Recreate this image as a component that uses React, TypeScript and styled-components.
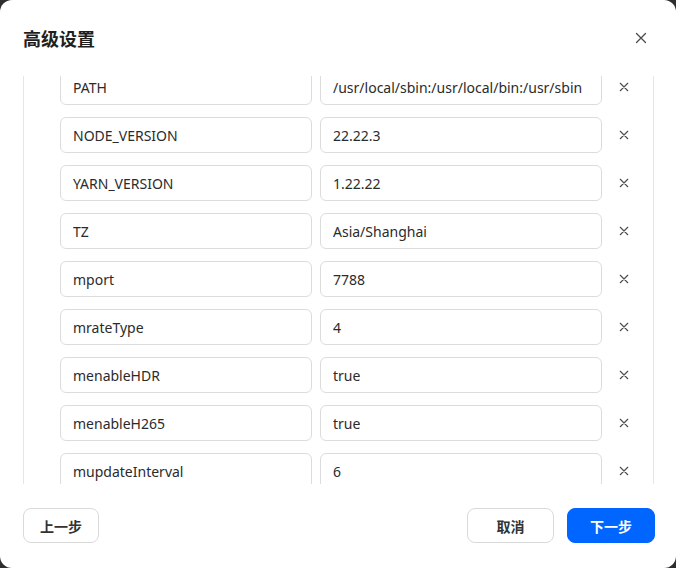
import React, { useEffect, useRef } from "react";
import styled, { createGlobalStyle } from "styled-components";

const GlobalStyle = createGlobalStyle`
  html, body {
    margin: 0;
    padding: 0;
    background: #2e2e2e;
  }
  * {
    box-sizing: border-box;
  }
`;

const ENV_ROWS: { key: string; value: string }[] = [
  { key: "HOME", value: "/root" },
  { key: "PATH", value: "/usr/local/sbin:/usr/local/bin:/usr/sbin" },
  { key: "NODE_VERSION", value: "22.22.3" },
  { key: "YARN_VERSION", value: "1.22.22" },
  { key: "TZ", value: "Asia/Shanghai" },
  { key: "mport", value: "7788" },
  { key: "mrateType", value: "4" },
  { key: "menableHDR", value: "true" },
  { key: "menableH265", value: "true" },
  { key: "mupdateInterval", value: "6" },
  { key: "mlogLevel", value: "info" }
];

const Dialog = styled.div`
  width: 676px;
  height: 568px;
  background: #fff;
  border-radius: 12px;
  display: flex;
  flex-direction: column;
  font-family: "Noto Sans", "Noto Sans CJK SC", sans-serif;
  color: #333;
  overflow: hidden;
`;

const Header = styled.div`
  display: flex;
  align-items: center;
  justify-content: space-between;
  height: 76px;
  padding: 0 21px 0 23px;
`;

const Title = styled.h2`
  margin: 0;
  font-size: 18px;
  font-weight: 700;
  color: #1f1f1f;
  font-family: "Noto Sans CJK SC", sans-serif;
`;

const IconButton = styled.button<{ $size: number }>`
  border: none;
  background: transparent;
  padding: 0;
  width: 28px;
  height: 28px;
  display: flex;
  align-items: center;
  justify-content: center;
  cursor: pointer;
  color: #4a4a4a;

  svg {
    width: ${(p) => p.$size}px;
    height: ${(p) => p.$size}px;
  }
`;

const Scroller = styled.div`
  flex: 1;
  overflow-y: auto;
  padding: 0 22px 0 23px;
  scrollbar-width: none;
  &::-webkit-scrollbar {
    display: none;
  }
`;

const VarBox = styled.div`
  border: 1px solid #e6e6e6;
  border-radius: 6px;
  padding: 12px 15px 12px 36px;
  display: flex;
  flex-direction: column;
  gap: 12px;
`;

const Row = styled.div`
  display: grid;
  grid-template-columns: 252px 282px 28px;
  column-gap: 8px;
  align-items: center;
`;

const Field = styled.input`
  height: 36px;
  width: 100%;
  border: 1px solid #dcdcdc;
  border-radius: 6px;
  padding: 0 12px;
  font-family: "Noto Sans", "Noto Sans CJK SC", sans-serif;
  font-size: 14px;
  color: #2b2b2b;
  background: #fff;
  outline: none;
`;

const Footer = styled.div`
  display: flex;
  align-items: center;
  justify-content: space-between;
  padding: 24px 21px 25px 23px;
`;

const Group = styled.div`
  display: flex;
  gap: 13px;
`;

const Button = styled.button<{ $primary?: boolean; $width: number }>`
  height: 35px;
  width: ${(p) => p.$width}px;
  border-radius: 8px;
  border: 1px solid ${(p) => (p.$primary ? "#0066ff" : "#d9d9d9")};
  background: ${(p) => (p.$primary ? "#0066ff" : "#fff")};
  color: ${(p) => (p.$primary ? "#fff" : "#333")};
  font-family: "Noto Sans CJK SC", sans-serif;
  font-size: 14px;
  font-weight: 700;
  cursor: pointer;
`;

function CloseIcon() {
  return (
    <svg viewBox="0 0 12 12" fill="none" stroke="currentColor" strokeWidth="1.3" strokeLinecap="round">
      <path d="M1.5 1.5 L10.5 10.5 M10.5 1.5 L1.5 10.5" />
    </svg>
  );
}

export default function App() {
  const scrollRef = useRef<HTMLDivElement>(null);

  useEffect(() => {
    if (scrollRef.current) scrollRef.current.scrollTop = 68;
  }, []);

  return (
    <>
      <GlobalStyle />
      <Dialog>
        <Header>
          <Title>高级设置</Title>
          <IconButton $size={12}>
            <CloseIcon />
          </IconButton>
        </Header>

        <Scroller ref={scrollRef}>
          <VarBox>
            {ENV_ROWS.map((row) => (
              <Row key={row.key}>
                <Field defaultValue={row.key} />
                <Field defaultValue={row.value} />
                <IconButton $size={10}>
                  <CloseIcon />
                </IconButton>
              </Row>
            ))}
          </VarBox>
        </Scroller>

        <Footer>
          <Button $width={76}>上一步</Button>
          <Group>
            <Button $width={87}>取消</Button>
            <Button $primary $width={88}>下一步</Button>
          </Group>
        </Footer>
      </Dialog>
    </>
  );
}
